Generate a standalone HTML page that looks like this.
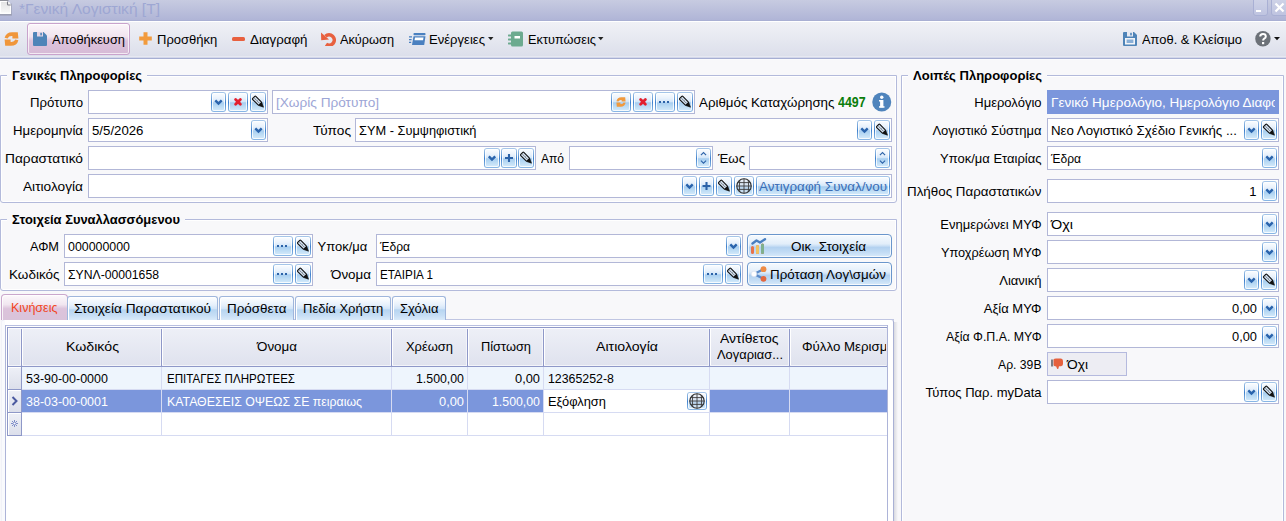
<!DOCTYPE html><html><head><meta charset="utf-8"><style>
html,body{margin:0;padding:0;}
body{width:1286px;height:521px;overflow:hidden;position:relative;background:#f8f8fa;font-family:"Liberation Sans",sans-serif;}
.t{position:absolute;white-space:nowrap;}
.inp{position:absolute;box-sizing:border-box;background:#fff;border:1px solid #b2b7d7;}
.sb{position:absolute;box-sizing:border-box;border:1px solid transparent;border-radius:3px;background:linear-gradient(#fbfdff 0%,#e9f2fc 30%,#d2e6f9 50%,#a6cdf0 54%,#bcdcf5 75%,#d6ebfb 100%) padding-box,linear-gradient(#a9c8ea 0%,#6a9fd8 35%,#3f80cc 52%,#6aa0da 75%,#8ab8e6 100%) border-box;box-shadow:inset 0 0 0 1px rgba(255,255,255,0.8);overflow:hidden;}
.bb{position:absolute;box-sizing:border-box;border:1px solid #6a96cc;border-radius:4px;background:linear-gradient(#f6fafe 0%,#e2eefa 40%,#c9dff5 50%,#b2d1f0 56%,#c4ddf5 80%,#d8eafa 100%);box-shadow:inset 0 0 0 1px rgba(255,255,255,0.75);}
</style></head><body>

<div style="position:absolute;left:0px;top:0px;width:1286px;height:20px;background:linear-gradient(#c7cbe1,#b0b5d7);"></div>
<div style="position:absolute;left:0px;top:20px;width:1286px;height:1px;background:#a9afd3;"></div>
<div style="position:absolute;left:0px;top:21px;width:1286px;height:1px;background:#ffffff;"></div>
<svg width="13" height="17" style="position:absolute;left:0;top:0"><defs><linearGradient id="dg" x1="0" y1="0" x2="0" y2="1"><stop offset="0" stop-color="#e4e4e4"/><stop offset="1" stop-color="#f7f7f7"/></linearGradient></defs><rect x="0" y="14" width="11.5" height="1.6" fill="#9598a8" opacity="0.8"/><rect x="11" y="3.5" width="0.9" height="12" fill="#9598a8" opacity="0.6"/><rect x="0" y="0" width="8.5" height="1" fill="#8e9098"/><path d="M0 1 H7.5 L11 4.5 V14 H0Z" fill="#fefefe"/><rect x="1" y="2" width="9" height="10.5" fill="url(#dg)"/><path d="M0 1.5 H7 L10.5 5 V13" fill="none" stroke="#fff" stroke-width="1"/><path d="M7.5 1.5 V4.2 Q7.5 5 8.3 5 H10.8" fill="none" stroke="#7d7f88" stroke-width="1.1"/></svg>
<div class="t" style="left:19.00px;top:-0.98px;font-size:15px;line-height:19px;color:#9ea7d3;transform:scaleX(1.0365);transform-origin:0 0;">*Γενική Λογιστική [Τ]</div>
<div style="position:absolute;left:1253px;top:-3px;width:15px;height:19px;border:1px solid #a9b0d4;border-radius:3px;box-sizing:border-box;background:linear-gradient(#d0d4e8,#bfc4e0)"></div>
<div style="position:absolute;left:1256px;top:10px;width:5px;height:2px;background:#fff;"></div>
<div style="position:absolute;left:1271px;top:-3px;width:18px;height:19px;border:1px solid #a9b0d4;border-radius:3px;box-sizing:border-box;background:linear-gradient(#d0d4e8,#bfc4e0)"></div>
<svg width="12" height="12" style="position:absolute;left:1274px;top:2px"><path d="M1.5 1.5 L9.5 9.5 M9.5 1.5 L1.5 9.5" stroke="#fff" stroke-width="2.2"/></svg>
<div style="position:absolute;left:0px;top:22px;width:1286px;height:34px;background:linear-gradient(#f0f1f6,#dcdfeb);"></div>
<div style="position:absolute;left:0px;top:56px;width:1286px;height:1px;background:#e6e8f1;"></div>
<div style="position:absolute;left:0px;top:57px;width:1286px;height:1px;background:#d3d7ea;"></div>
<div style="position:absolute;left:0px;top:58px;width:1286px;height:1px;background:#a6aed3;"></div>
<div style="position:absolute;left:0px;top:59px;width:1286px;height:1px;background:#fbfbfd;"></div>
<svg width="15" height="14" viewBox="0 0 15 14" style="position:absolute;left:4px;top:32px"><path d="M0.6 5.8 Q2 0.2 8 0.2 H13.8 L14.4 6.4 H8.4 V4.1 Q4.8 3.7 3.6 6.4 Z" fill="#f0963a"/><path d="M0.6 5.8 Q2 0.2 8 0.2 H13.8 L14.4 6.4 H8.4 V4.1 Q4.8 3.7 3.6 6.4 Z" fill="#f0963a" transform="rotate(180 7.5 7)"/></svg>
<div style="position:absolute;left:27px;top:23px;width:103px;height:32px;box-sizing:border-box;border:1px solid #c9a3cc;border-radius:3px;background:linear-gradient(#fbf6fa 0%,#f1e4ef 42%,#ddc3dc 56%,#d6bad6 100%);box-shadow:inset 0 0 0 1px rgba(255,255,255,0.7)"></div>
<svg width="14" height="14" style="position:absolute;left:33px;top:32px"><path d="M1 0 H10.5 L14 3.5 V13 Q14 14 13 14 H1 Q0 14 0 13 V1 Q0 0 1 0Z" fill="#4f84b8"/><rect x="4" y="0" width="6" height="4.5" fill="#e6d6e6"/><rect x="7.3" y="0.8" width="1.6" height="2.6" fill="#4f84b8"/></svg>
<div class="t" style="left:52.00px;top:31.00px;font-size:13px;line-height:17px;color:#000;transform:scaleX(0.9888);transform-origin:0 0;">Αποθήκευση</div>
<svg width="13" height="13" style="position:absolute;left:139px;top:32px"><path d="M6.5 0.2 V12.8 M0.2 6.5 H12.8" stroke="#f29b3d" stroke-width="4"/></svg>
<div class="t" style="left:157.00px;top:31.00px;font-size:13px;line-height:17px;color:#000;">Προσθήκη</div>
<svg width="13" height="4" style="position:absolute;left:232px;top:37px"><rect x="0" y="0" width="13" height="4" rx="1.5" fill="#e8603f"/></svg>
<div class="t" style="left:250.00px;top:31.00px;font-size:13px;line-height:17px;color:#000;transform:scaleX(1.0236);transform-origin:0 0;">Διαγραφή</div>
<svg width="15" height="14" style="position:absolute;left:321px;top:32px"><path d="M4.5 4.2 A5.2 5.2 0 1 1 5 12.2" fill="none" stroke="#e8603f" stroke-width="3.6"/><path d="M0 0.6 L0.2 8.2 L8 7.4Z" fill="#e8603f"/></svg>
<div class="t" style="left:340.00px;top:31.00px;font-size:13px;line-height:17px;color:#000;transform:scaleX(0.9801);transform-origin:0 0;">Ακύρωση</div>
<svg width="17" height="13" style="position:absolute;left:409px;top:33px"><rect x="4.5" y="0" width="12" height="2.2" rx="0.8" fill="#4a80c0"/><path d="M4.5 3.2 H16.5 L15.2 12 H3 Z" fill="#4a80c0"/><path d="M6 4.6 H14.5 L14 7.2 H5.5Z" fill="#fff"/><path d="M0 3.8 H3 M0 6.6 H2.6 M0 9.4 H2.2" stroke="#4a80c0" stroke-width="1.3"/></svg>
<div class="t" style="left:429.00px;top:31.00px;font-size:13px;line-height:17px;color:#000;transform:scaleX(1.0070);transform-origin:0 0;">Ενέργειες</div>
<svg width="6" height="4" style="position:absolute;left:488px;top:37px"><path d="M0 0 H5.5 L2.75 3.2Z" fill="#222"/></svg>
<svg width="15" height="16" style="position:absolute;left:508px;top:31px"><rect x="3" y="0.5" width="12" height="15" rx="1.5" fill="#6caa8f"/><rect x="6.5" y="5" width="5.5" height="2.5" fill="#fff"/><path d="M0.6 4.5 H4 M0.6 8.5 H4 M0.6 12.5 H4" stroke="#6caa8f" stroke-width="1.8" stroke-linecap="round"/></svg>
<div class="t" style="left:528.00px;top:31.00px;font-size:13px;line-height:17px;color:#000;transform:scaleX(0.9806);transform-origin:0 0;">Εκτυπώσεις</div>
<svg width="6" height="4" style="position:absolute;left:598px;top:37px"><path d="M0 0 H5.5 L2.75 3.2Z" fill="#222"/></svg>
<svg width="15" height="14" style="position:absolute;left:1123px;top:32px"><path d="M1 0 H11 L14 3 V13 Q14 14 13 14 H1 Q0 14 0 13 V1 Q0 0 1 0Z" fill="#4f84b8"/><rect x="4" y="0" width="6" height="4.5" fill="#e8eaf2"/><rect x="7.2" y="0.8" width="1.6" height="2.6" fill="#4f84b8"/><rect x="2" y="6" width="10" height="6.5" fill="#f2f4f8"/><rect x="3.6" y="7.5" width="6.8" height="3.5" fill="#88aed6"/></svg>
<div class="t" style="left:1142.00px;top:31.00px;font-size:13px;line-height:17px;color:#000;transform:scaleX(0.9909);transform-origin:0 0;">Αποθ. &amp; Κλείσιμο</div>
<svg width="16" height="16" style="position:absolute;left:1255px;top:31px"><circle cx="7.9" cy="7.8" r="7.7" fill="#6c7178"/><path d="M5.2 5.6 Q5.2 3 8 3 Q10.8 3 10.8 5.4 Q10.8 6.8 9.2 7.6 Q8.1 8.2 8.1 9.6" fill="none" stroke="#fff" stroke-width="2"/><rect x="7" y="11" width="2.2" height="2.2" fill="#fff"/></svg>
<svg width="6" height="4" style="position:absolute;left:1274px;top:37px"><path d="M0 0 H6 L3 3.2Z" fill="#111"/></svg>
<div style="position:absolute;left:0px;top:75px;width:897px;height:128px;box-sizing:border-box;border:1px solid #b3badb;border-radius:0 0 3px 3px;box-shadow:inset 0 0 0 1px rgba(255,255,255,0.9);"></div>
<div style="position:absolute;left:7px;top:74px;width:140px;height:3px;background:#f8f8fa;"></div>
<div class="t" style="left:12.00px;top:66.60px;font-size:13.7px;line-height:17.7px;color:#000;font-weight:bold;transform:scaleX(0.9448);transform-origin:0 0;">Γενικές Πληροφορίες</div>
<div class="t" style="left:30.00px;top:94.00px;font-size:13px;line-height:17px;color:#000;transform:scaleX(1.0174);transform-origin:0 0;">Πρότυπο</div>
<div class="inp" style="left:88px;top:90px;width:180px;height:24px;"></div>
<div class="sb" style="left:211px;top:92px;width:15px;height:20px"><svg width="13" height="18" style="position:absolute;left:0;top:0"><path d="M3.3 7.4 L6.5 10.6 L9.7 7.4" fill="none" stroke="#2a64ad" stroke-width="2.5"/></svg></div>
<div class="sb" style="left:228px;top:92px;width:20px;height:20px"><svg width="18" height="18" style="position:absolute;left:0;top:0"><path d="M6.6 6.4 L11.4 11.2 M11.4 6.4 L6.6 11.2" stroke="#e3202e" stroke-width="2.8" stroke-linecap="round"/></svg></div>
<div class="sb" style="left:250px;top:92px;width:16px;height:20px"><svg width="14" height="18" style="position:absolute;left:0;top:0"><g transform="translate(7.4 9.1) rotate(-45)"><rect x="-2.2" y="-6.6" width="4.4" height="9.2" rx="0.8" fill="#d4e2f2" stroke="#111" stroke-width="1.15"/><path d="M-2.2 2.6 L0 7.2 L2.2 2.6Z" fill="#111" stroke="#111" stroke-width="0.6"/><line x1="0" y1="-5.4" x2="0" y2="2.6" stroke="#1a1a1a" stroke-width="0.9" stroke-dasharray="1.1 0.9"/></g></svg></div>
<div class="inp" style="left:272px;top:90px;width:423px;height:24px;"></div>
<div class="t" style="left:276.00px;top:94.00px;font-size:13px;line-height:17px;color:#9da6d6;transform:scaleX(1.0478);transform-origin:0 0;">[Χωρίς Πρότυπο]</div>
<div class="sb" style="left:611px;top:92px;width:20px;height:20px"><svg width="10" height="10" viewBox="0 0 15 14" preserveAspectRatio="none" style="position:absolute;left:4.0px;top:4.0px"><path d="M0.6 5.8 Q2 0.2 8 0.2 H13.8 L14.4 6.4 H8.4 V4.1 Q4.8 3.7 3.6 6.4 Z" fill="#f09a3e"/><path d="M0.6 5.8 Q2 0.2 8 0.2 H13.8 L14.4 6.4 H8.4 V4.1 Q4.8 3.7 3.6 6.4 Z" fill="#f09a3e" transform="rotate(180 7.5 7)"/></svg></div>
<div class="sb" style="left:633px;top:92px;width:20px;height:20px"><svg width="18" height="18" style="position:absolute;left:0;top:0"><path d="M6.6 6.4 L11.4 11.2 M11.4 6.4 L6.6 11.2" stroke="#e3202e" stroke-width="2.8" stroke-linecap="round"/></svg></div>
<div class="sb" style="left:655px;top:92px;width:20px;height:20px"><svg width="18" height="18" style="position:absolute;left:0;top:0"><rect x="3.0" y="8.0" width="2" height="2" fill="#2b62a8"/><rect x="7.0" y="8.0" width="2" height="2" fill="#2b62a8"/><rect x="11.0" y="8.0" width="2" height="2" fill="#2b62a8"/></svg></div>
<div class="sb" style="left:677px;top:92px;width:16px;height:20px"><svg width="14" height="18" style="position:absolute;left:0;top:0"><g transform="translate(7.4 9.1) rotate(-45)"><rect x="-2.2" y="-6.6" width="4.4" height="9.2" rx="0.8" fill="#d4e2f2" stroke="#111" stroke-width="1.15"/><path d="M-2.2 2.6 L0 7.2 L2.2 2.6Z" fill="#111" stroke="#111" stroke-width="0.6"/><line x1="0" y1="-5.4" x2="0" y2="2.6" stroke="#1a1a1a" stroke-width="0.9" stroke-dasharray="1.1 0.9"/></g></svg></div>
<div class="t" style="left:699.00px;top:94.00px;font-size:13px;line-height:17px;color:#000;transform:scaleX(1.0259);transform-origin:0 0;">Αριθμός Καταχώρησης</div>
<div class="t" style="left:838.00px;top:93.00px;font-size:14px;line-height:18px;color:#0a7d0a;font-weight:bold;transform:scaleX(0.8835);transform-origin:0 0;">4497</div>
<svg width="20" height="20" style="position:absolute;left:872px;top:92px"><circle cx="9.75" cy="10" r="9.5" fill="#4f84bc"/><circle cx="9.75" cy="5.2" r="1.7" fill="#fff"/><rect x="8.1" y="8" width="3.3" height="7.5" fill="#fff"/><rect x="7" y="8" width="2" height="1.5" fill="#fff"/><rect x="7" y="14.2" width="5.5" height="1.5" fill="#fff"/></svg>
<div class="t" style="left:13.00px;top:122.00px;font-size:13px;line-height:17px;color:#000;transform:scaleX(1.0156);transform-origin:0 0;">Ημερομηνία</div>
<div class="inp" style="left:88px;top:118px;width:180px;height:24px;"></div>
<div class="t" style="left:92.00px;top:122.00px;font-size:13px;line-height:17px;color:#000;transform:scaleX(1.0173);transform-origin:0 0;">5/5/2026</div>
<div class="sb" style="left:251px;top:120px;width:15px;height:20px"><svg width="13" height="18" style="position:absolute;left:0;top:0"><path d="M3.3 7.4 L6.5 10.6 L9.7 7.4" fill="none" stroke="#2a64ad" stroke-width="2.5"/></svg></div>
<div class="t" style="left:312.80px;top:122.00px;font-size:13px;line-height:17px;color:#000;transform:scaleX(1.0496);transform-origin:0 0;">Τύπος</div>
<div class="inp" style="left:355px;top:118px;width:537px;height:24px;"></div>
<div class="t" style="left:359.00px;top:122.00px;font-size:13px;line-height:17px;color:#000;transform:scaleX(0.9847);transform-origin:0 0;">ΣΥΜ - Συμψηφιστική</div>
<div class="sb" style="left:857px;top:120px;width:15px;height:20px"><svg width="13" height="18" style="position:absolute;left:0;top:0"><path d="M3.3 7.4 L6.5 10.6 L9.7 7.4" fill="none" stroke="#2a64ad" stroke-width="2.5"/></svg></div>
<div class="sb" style="left:874px;top:120px;width:16px;height:20px"><svg width="14" height="18" style="position:absolute;left:0;top:0"><g transform="translate(7.4 9.1) rotate(-45)"><rect x="-2.2" y="-6.6" width="4.4" height="9.2" rx="0.8" fill="#d4e2f2" stroke="#111" stroke-width="1.15"/><path d="M-2.2 2.6 L0 7.2 L2.2 2.6Z" fill="#111" stroke="#111" stroke-width="0.6"/><line x1="0" y1="-5.4" x2="0" y2="2.6" stroke="#1a1a1a" stroke-width="0.9" stroke-dasharray="1.1 0.9"/></g></svg></div>
<div class="t" style="left:5.00px;top:150.00px;font-size:13px;line-height:17px;color:#000;transform:scaleX(1.0552);transform-origin:0 0;">Παραστατικό</div>
<div class="inp" style="left:88px;top:146px;width:448px;height:24px;"></div>
<div class="sb" style="left:484px;top:148px;width:16px;height:20px"><svg width="14" height="18" style="position:absolute;left:0;top:0"><path d="M3.8 7.4 L7.0 10.6 L10.2 7.4" fill="none" stroke="#2a64ad" stroke-width="2.5"/></svg></div>
<div class="sb" style="left:501px;top:148px;width:16px;height:20px"><svg width="14" height="18" style="position:absolute;left:0;top:0"><path d="M3.0 9.0 H11.0 M7.0 5.0 V13.0" stroke="#2b62a8" stroke-width="2.1"/></svg></div>
<div class="sb" style="left:518px;top:148px;width:16px;height:20px"><svg width="14" height="18" style="position:absolute;left:0;top:0"><g transform="translate(7.4 9.1) rotate(-45)"><rect x="-2.2" y="-6.6" width="4.4" height="9.2" rx="0.8" fill="#d4e2f2" stroke="#111" stroke-width="1.15"/><path d="M-2.2 2.6 L0 7.2 L2.2 2.6Z" fill="#111" stroke="#111" stroke-width="0.6"/><line x1="0" y1="-5.4" x2="0" y2="2.6" stroke="#1a1a1a" stroke-width="0.9" stroke-dasharray="1.1 0.9"/></g></svg></div>
<div class="t" style="left:541.00px;top:150.00px;font-size:13px;line-height:17px;color:#000;transform:scaleX(0.9246);transform-origin:0 0;">Από</div>
<div class="inp" style="left:569px;top:146px;width:144px;height:24px;"></div>
<div class="sb" style="left:696px;top:148px;width:15px;height:20px"><svg width="13" height="18" style="position:absolute;left:0;top:0"><path d="M3.9 6.2 L6.5 3.5999999999999996 L9.1 6.2 M3.9 11.6 L6.5 14.2 L9.1 11.6" fill="none" stroke="#2b62a8" stroke-width="1.1"/></svg></div>
<div class="t" style="left:717.50px;top:150.00px;font-size:13px;line-height:17px;color:#000;transform:scaleX(1.0147);transform-origin:0 0;">Έως</div>
<div class="inp" style="left:749px;top:146px;width:143px;height:24px;"></div>
<div class="sb" style="left:875px;top:148px;width:15px;height:20px"><svg width="13" height="18" style="position:absolute;left:0;top:0"><path d="M3.9 6.2 L6.5 3.5999999999999996 L9.1 6.2 M3.9 11.6 L6.5 14.2 L9.1 11.6" fill="none" stroke="#2b62a8" stroke-width="1.1"/></svg></div>
<div class="t" style="left:23.00px;top:178.00px;font-size:13px;line-height:17px;color:#000;transform:scaleX(1.0523);transform-origin:0 0;">Αιτιολογία</div>
<div class="inp" style="left:88px;top:174px;width:804px;height:24px;"></div>
<div class="sb" style="left:682px;top:176px;width:15px;height:20px"><svg width="13" height="18" style="position:absolute;left:0;top:0"><path d="M3.3 7.4 L6.5 10.6 L9.7 7.4" fill="none" stroke="#2a64ad" stroke-width="2.5"/></svg></div>
<div class="sb" style="left:699px;top:176px;width:15px;height:20px"><svg width="13" height="18" style="position:absolute;left:0;top:0"><path d="M2.5 9.0 H10.5 M6.5 5.0 V13.0" stroke="#2b62a8" stroke-width="2.1"/></svg></div>
<div class="sb" style="left:716px;top:176px;width:16px;height:20px"><svg width="14" height="18" style="position:absolute;left:0;top:0"><g transform="translate(7.4 9.1) rotate(-45)"><rect x="-2.2" y="-6.6" width="4.4" height="9.2" rx="0.8" fill="#d4e2f2" stroke="#111" stroke-width="1.15"/><path d="M-2.2 2.6 L0 7.2 L2.2 2.6Z" fill="#111" stroke="#111" stroke-width="0.6"/><line x1="0" y1="-5.4" x2="0" y2="2.6" stroke="#1a1a1a" stroke-width="0.9" stroke-dasharray="1.1 0.9"/></g></svg></div>
<div class="sb" style="left:734px;top:176px;width:20px;height:20px"><svg width="18" height="18" style="position:absolute;left:0;top:0"><defs><clipPath id="gc1818"><circle cx="9.0" cy="9.0" r="7.6"/></clipPath></defs><circle cx="9.0" cy="9.0" r="7.6" fill="#d8dde4" fill-opacity="0.35"/><g clip-path="url(#gc1818)" stroke="#3c3c3c" stroke-width="0.9" fill="none"><path d="M4.8 1.0 Q4.0 9.0 4.8 17.0 M9.0 1.0 V17.0 M13.2 1.0 Q14.0 9.0 13.2 17.0"/><path d="M1.0 5.6 H17.0 M1.0 9.0 H17.0 M1.0 12.4 H17.0"/></g><circle cx="9.0" cy="9.0" r="7.2" fill="none" stroke="#333" stroke-width="1.1"/></svg></div>
<div class="sb" style="left:756px;top:176px;width:134px;height:20px"></div>
<div class="t" style="left:759.00px;top:178.00px;font-size:13px;line-height:17px;color:#3a6db5;transform:scaleX(1.0342);transform-origin:0 0;">Αντιγραφή Συναλ/νου</div>
<div style="position:absolute;left:0px;top:219px;width:897px;height:72px;box-sizing:border-box;border:1px solid #b3badb;border-radius:0 0 3px 3px;box-shadow:inset 0 0 0 1px rgba(255,255,255,0.9);"></div>
<div style="position:absolute;left:7px;top:218px;width:178px;height:3px;background:#f8f8fa;"></div>
<div class="t" style="left:12.00px;top:210.60px;font-size:13.7px;line-height:17.7px;color:#000;font-weight:bold;transform:scaleX(0.9446);transform-origin:0 0;">Στοιχεία Συναλλασσόμενου</div>
<div class="t" style="left:30.00px;top:238.00px;font-size:13px;line-height:17px;color:#000;transform:scaleX(0.9831);transform-origin:0 0;">ΑΦΜ</div>
<div class="inp" style="left:64px;top:234px;width:249px;height:24px;"></div>
<div class="t" style="left:68.00px;top:238.00px;font-size:13px;line-height:17px;color:#000;transform:scaleX(0.9522);transform-origin:0 0;">000000000</div>
<div class="sb" style="left:273px;top:236px;width:20px;height:20px"><svg width="18" height="18" style="position:absolute;left:0;top:0"><rect x="3.0" y="8.0" width="2" height="2" fill="#2b62a8"/><rect x="7.0" y="8.0" width="2" height="2" fill="#2b62a8"/><rect x="11.0" y="8.0" width="2" height="2" fill="#2b62a8"/></svg></div>
<div class="sb" style="left:295px;top:236px;width:16px;height:20px"><svg width="14" height="18" style="position:absolute;left:0;top:0"><g transform="translate(7.4 9.1) rotate(-45)"><rect x="-2.2" y="-6.6" width="4.4" height="9.2" rx="0.8" fill="#d4e2f2" stroke="#111" stroke-width="1.15"/><path d="M-2.2 2.6 L0 7.2 L2.2 2.6Z" fill="#111" stroke="#111" stroke-width="0.6"/><line x1="0" y1="-5.4" x2="0" y2="2.6" stroke="#1a1a1a" stroke-width="0.9" stroke-dasharray="1.1 0.9"/></g></svg></div>
<div class="t" style="left:317.50px;top:238.00px;font-size:13px;line-height:17px;color:#000;">Υποκ/μα</div>
<div class="inp" style="left:376px;top:234px;width:367px;height:24px;"></div>
<div class="t" style="left:380.00px;top:238.00px;font-size:13px;line-height:17px;color:#000;transform:scaleX(0.9280);transform-origin:0 0;">Έδρα</div>
<div class="sb" style="left:726px;top:236px;width:15px;height:20px"><svg width="13" height="18" style="position:absolute;left:0;top:0"><path d="M3.3 7.4 L6.5 10.6 L9.7 7.4" fill="none" stroke="#2a64ad" stroke-width="2.5"/></svg></div>
<div class="bb" style="left:747px;top:234px;width:145px;height:24px"></div>
<svg width="16" height="16" style="position:absolute;left:751px;top:238px"><path d="M1.5 9.5 V14.5 M6.5 8.5 V14.5 M11.5 7 V14.5" stroke-width="3" stroke-linecap="round" stroke="#e8734a"/><path d="M6.5 8.5 V14.5" stroke-width="3" stroke-linecap="round" stroke="#f0c463"/><path d="M11.5 7 V14.5" stroke-width="3" stroke-linecap="round" stroke="#7fb08e"/><path d="M1.5 5.5 L5.5 2.5 L9 4.5 L14 1.2" fill="none" stroke="#4a7fc0" stroke-width="2.4" stroke-linejoin="round" stroke-linecap="round"/></svg>
<div class="t" style="left:791.00px;top:238.00px;font-size:13px;line-height:17px;color:#000;transform:scaleX(1.0383);transform-origin:0 0;">Οικ. Στοιχεία</div>
<div class="t" style="left:8.50px;top:266.00px;font-size:13px;line-height:17px;color:#000;transform:scaleX(1.0382);transform-origin:0 0;">Κωδικός</div>
<div class="inp" style="left:64px;top:262px;width:249px;height:24px;"></div>
<div class="t" style="left:68.00px;top:266.00px;font-size:13px;line-height:17px;color:#000;transform:scaleX(0.9383);transform-origin:0 0;">ΣΥΝΛ-00001658</div>
<div class="sb" style="left:273px;top:264px;width:20px;height:20px"><svg width="18" height="18" style="position:absolute;left:0;top:0"><rect x="3.0" y="8.0" width="2" height="2" fill="#2b62a8"/><rect x="7.0" y="8.0" width="2" height="2" fill="#2b62a8"/><rect x="11.0" y="8.0" width="2" height="2" fill="#2b62a8"/></svg></div>
<div class="sb" style="left:295px;top:264px;width:16px;height:20px"><svg width="14" height="18" style="position:absolute;left:0;top:0"><g transform="translate(7.4 9.1) rotate(-45)"><rect x="-2.2" y="-6.6" width="4.4" height="9.2" rx="0.8" fill="#d4e2f2" stroke="#111" stroke-width="1.15"/><path d="M-2.2 2.6 L0 7.2 L2.2 2.6Z" fill="#111" stroke="#111" stroke-width="0.6"/><line x1="0" y1="-5.4" x2="0" y2="2.6" stroke="#1a1a1a" stroke-width="0.9" stroke-dasharray="1.1 0.9"/></g></svg></div>
<div class="t" style="left:331.00px;top:266.00px;font-size:13px;line-height:17px;color:#000;transform:scaleX(1.0310);transform-origin:0 0;">Όνομα</div>
<div class="inp" style="left:376px;top:262px;width:367px;height:24px;"></div>
<div class="t" style="left:380.00px;top:266.00px;font-size:13px;line-height:17px;color:#000;transform:scaleX(0.8983);transform-origin:0 0;">ΕΤΑΙΡΙΑ 1</div>
<div class="sb" style="left:703px;top:264px;width:20px;height:20px"><svg width="18" height="18" style="position:absolute;left:0;top:0"><rect x="3.0" y="8.0" width="2" height="2" fill="#2b62a8"/><rect x="7.0" y="8.0" width="2" height="2" fill="#2b62a8"/><rect x="11.0" y="8.0" width="2" height="2" fill="#2b62a8"/></svg></div>
<div class="sb" style="left:725px;top:264px;width:16px;height:20px"><svg width="14" height="18" style="position:absolute;left:0;top:0"><g transform="translate(7.4 9.1) rotate(-45)"><rect x="-2.2" y="-6.6" width="4.4" height="9.2" rx="0.8" fill="#d4e2f2" stroke="#111" stroke-width="1.15"/><path d="M-2.2 2.6 L0 7.2 L2.2 2.6Z" fill="#111" stroke="#111" stroke-width="0.6"/><line x1="0" y1="-5.4" x2="0" y2="2.6" stroke="#1a1a1a" stroke-width="0.9" stroke-dasharray="1.1 0.9"/></g></svg></div>
<div class="bb" style="left:747px;top:262px;width:145px;height:24px"></div>
<svg width="16" height="16" style="position:absolute;left:751px;top:266px"><path d="M3 8 L12.5 3.2 M3 8 L12.5 12.8" stroke="#5b8bc9" stroke-width="2.4"/><circle cx="3" cy="8" r="2.8" fill="#fff" stroke="#d0d8e8" stroke-width="0.5"/><circle cx="12.5" cy="3.2" r="2.9" fill="#ef8c45"/><circle cx="12.5" cy="12.8" r="2.9" fill="#e2673f"/></svg>
<div class="t" style="left:770.00px;top:266.00px;font-size:13px;line-height:17px;color:#000;transform:scaleX(1.0297);transform-origin:0 0;">Πρόταση Λογ\σμών</div>
<div style="position:absolute;left:1px;top:319px;width:893px;height:210px;box-sizing:border-box;border:1px solid #c9cde6;border-left-color:#f1f2f8;border-right-color:#a9b1d5;border-radius:3px;background:linear-gradient(to right,#f9fafd 0,#f9fafd 3px,#fff 3px);"></div>
<div style="position:absolute;left:894px;top:322px;width:4px;height:199px;background:linear-gradient(to right,#d9dae0,#f8f8fa);"></div>
<div style="position:absolute;left:1px;top:319px;width:893px;height:1px;background:#c0c6e2;"></div>
<div style="position:absolute;left:1px;top:294px;width:67px;height:26px;box-sizing:border-box;border:1px solid #caa7cc;border-bottom:none;border-radius:4px 4px 0 0;background:linear-gradient(#fcf9fb 0%,#f1e6f0 38%,#dcc3db 55%,#d9c3da 100%);box-shadow:inset 1px 1px 0 rgba(255,255,255,0.8);"></div>
<div class="t" style="left:11.30px;top:299.00px;font-size:13px;line-height:17px;color:#f2451c;transform:scaleX(0.9631);transform-origin:0 0;">Κινήσεις</div>
<div style="position:absolute;left:67px;top:296px;width:151px;height:24px;box-sizing:border-box;border:1px solid #9fb6dc;border-bottom:none;border-radius:3px 3px 0 0;background:linear-gradient(#ffffff 0%,#e6f0fb 35%,#d3e5f8 50%,#b7d5f1 56%,#c6def5 80%,#d9eafa 100%);box-shadow:inset 1px 1px 0 #fff;"></div>
<div class="t" style="left:73.50px;top:300.00px;font-size:13px;line-height:17px;color:#000;transform:scaleX(1.0526);transform-origin:0 0;">Στοιχεία Παραστατικού</div>
<div style="position:absolute;left:219px;top:296px;width:75px;height:24px;box-sizing:border-box;border:1px solid #9fb6dc;border-bottom:none;border-radius:3px 3px 0 0;background:linear-gradient(#ffffff 0%,#e6f0fb 35%,#d3e5f8 50%,#b7d5f1 56%,#c6def5 80%,#d9eafa 100%);box-shadow:inset 1px 1px 0 #fff;"></div>
<div class="t" style="left:227.00px;top:300.00px;font-size:13px;line-height:17px;color:#000;transform:scaleX(1.0339);transform-origin:0 0;">Πρόσθετα</div>
<div style="position:absolute;left:295px;top:296px;width:96px;height:24px;box-sizing:border-box;border:1px solid #9fb6dc;border-bottom:none;border-radius:3px 3px 0 0;background:linear-gradient(#ffffff 0%,#e6f0fb 35%,#d3e5f8 50%,#b7d5f1 56%,#c6def5 80%,#d9eafa 100%);box-shadow:inset 1px 1px 0 #fff;"></div>
<div class="t" style="left:303.00px;top:300.00px;font-size:13px;line-height:17px;color:#000;">Πεδία Χρήστη</div>
<div style="position:absolute;left:392px;top:296px;width:54px;height:24px;box-sizing:border-box;border:1px solid #9fb6dc;border-bottom:none;border-radius:3px 3px 0 0;background:linear-gradient(#ffffff 0%,#e6f0fb 35%,#d3e5f8 50%,#b7d5f1 56%,#c6def5 80%,#d9eafa 100%);box-shadow:inset 1px 1px 0 #fff;"></div>
<div class="t" style="left:400.00px;top:300.00px;font-size:13px;line-height:17px;color:#000;">Σχόλια</div>
<div style="position:absolute;left:5px;top:325px;width:883px;height:1px;background:#b8bfe0;"></div>
<div style="position:absolute;left:5px;top:325px;width:1px;height:196px;background:#adb4d8;"></div>
<div style="position:absolute;left:887px;top:325px;width:1px;height:196px;background:#adb4d8;"></div>
<div style="position:absolute;left:7px;top:327px;width:880px;height:39px;background:linear-gradient(#eef0f7,#dfe2ee);"></div>
<div style="position:absolute;left:7px;top:327px;width:880px;height:1px;background:#8e98c8;"></div>
<div style="position:absolute;left:7px;top:327px;width:1px;height:109px;background:#8e98c8;"></div>
<div style="position:absolute;left:8px;top:365px;width:878px;height:1px;background:#f3f4f9;"></div>
<div style="position:absolute;left:7px;top:366px;width:880px;height:1px;background:#8e98c8;"></div>
<div style="position:absolute;left:21px;top:327px;width:1px;height:40px;background:#8e98c8;"></div>
<div style="position:absolute;left:22px;top:328px;width:1px;height:37px;background:#fff;"></div>
<div style="position:absolute;left:20px;top:329px;width:1px;height:36px;background:#f4f5fa;"></div>
<div style="position:absolute;left:161px;top:327px;width:1px;height:40px;background:#8e98c8;"></div>
<div style="position:absolute;left:162px;top:328px;width:1px;height:37px;background:#fff;"></div>
<div style="position:absolute;left:160px;top:329px;width:1px;height:36px;background:#f4f5fa;"></div>
<div style="position:absolute;left:391px;top:327px;width:1px;height:40px;background:#8e98c8;"></div>
<div style="position:absolute;left:392px;top:328px;width:1px;height:37px;background:#fff;"></div>
<div style="position:absolute;left:390px;top:329px;width:1px;height:36px;background:#f4f5fa;"></div>
<div style="position:absolute;left:467px;top:327px;width:1px;height:40px;background:#8e98c8;"></div>
<div style="position:absolute;left:468px;top:328px;width:1px;height:37px;background:#fff;"></div>
<div style="position:absolute;left:466px;top:329px;width:1px;height:36px;background:#f4f5fa;"></div>
<div style="position:absolute;left:543px;top:327px;width:1px;height:40px;background:#8e98c8;"></div>
<div style="position:absolute;left:544px;top:328px;width:1px;height:37px;background:#fff;"></div>
<div style="position:absolute;left:542px;top:329px;width:1px;height:36px;background:#f4f5fa;"></div>
<div style="position:absolute;left:709px;top:327px;width:1px;height:40px;background:#8e98c8;"></div>
<div style="position:absolute;left:710px;top:328px;width:1px;height:37px;background:#fff;"></div>
<div style="position:absolute;left:708px;top:329px;width:1px;height:36px;background:#f4f5fa;"></div>
<div style="position:absolute;left:789px;top:327px;width:1px;height:40px;background:#8e98c8;"></div>
<div style="position:absolute;left:790px;top:328px;width:1px;height:37px;background:#fff;"></div>
<div style="position:absolute;left:788px;top:329px;width:1px;height:36px;background:#f4f5fa;"></div>
<div style="position:absolute;left:22px;top:367px;width:865px;height:22px;background:#eef5fd;"></div>
<div style="position:absolute;left:22px;top:389px;width:865px;height:1px;background:#d6dbf2;"></div>
<div style="position:absolute;left:22px;top:390px;width:522px;height:22px;background:#7b96dc;"></div>
<div style="position:absolute;left:544px;top:390px;width:165px;height:22px;background:#fff;"></div>
<div style="position:absolute;left:710px;top:390px;width:177px;height:22px;background:#7b96dc;"></div>
<div style="position:absolute;left:22px;top:412px;width:865px;height:1px;background:#d6dbf2;"></div>
<div style="position:absolute;left:22px;top:435px;width:865px;height:1px;background:#d6dbf2;"></div>
<div style="position:absolute;left:161px;top:367px;width:1px;height:68px;background:#d6dbf2;"></div>
<div style="position:absolute;left:391px;top:367px;width:1px;height:68px;background:#d6dbf2;"></div>
<div style="position:absolute;left:467px;top:367px;width:1px;height:68px;background:#d6dbf2;"></div>
<div style="position:absolute;left:543px;top:367px;width:1px;height:68px;background:#d6dbf2;"></div>
<div style="position:absolute;left:709px;top:367px;width:1px;height:68px;background:#d6dbf2;"></div>
<div style="position:absolute;left:789px;top:367px;width:1px;height:68px;background:#d6dbf2;"></div>
<div style="position:absolute;left:7px;top:367px;width:15px;height:23px;background:linear-gradient(#eef0f7,#dcdfeb);border:1px solid #8e98c8;border-top:none;box-sizing:border-box;box-shadow:inset 1px 1px 0 #fff;"></div>
<div style="position:absolute;left:7px;top:390px;width:15px;height:23px;background:linear-gradient(#eef0f7,#dcdfeb);border:1px solid #8e98c8;border-top:none;box-sizing:border-box;box-shadow:inset 1px 1px 0 #fff;"></div>
<div style="position:absolute;left:7px;top:413px;width:15px;height:23px;background:linear-gradient(#eef0f7,#dcdfeb);border:1px solid #8e98c8;border-top:none;box-sizing:border-box;box-shadow:inset 1px 1px 0 #fff;"></div>
<div style="position:absolute;left:8px;top:328px;width:878px;height:1px;background:#fbfbfe;"></div>
<div style="position:absolute;left:8px;top:328px;width:1px;height:37px;background:#fbfbfe;"></div>
<svg width="8" height="10" style="position:absolute;left:11px;top:396px"><path d="M1.5 1 L5.5 5 L1.5 9" fill="none" stroke="#4b5aa0" stroke-width="2"/></svg>
<svg width="8" height="8" style="position:absolute;left:11px;top:419.5px"><path d="M3.5 0 V7 M0 3.5 H7 M1 1 L6 6 M6 1 L1 6" stroke="#7282c4" stroke-width="0.9"/><circle cx="3.5" cy="3.5" r="1.1" fill="#fff"/></svg>
<div class="t" style="left:65.50px;top:338.00px;font-size:13px;line-height:17px;color:#000;transform:scaleX(1.0896);transform-origin:0 0;">Κωδικός</div>
<div class="t" style="left:256.50px;top:338.00px;font-size:13px;line-height:17px;color:#000;transform:scaleX(1.0310);transform-origin:0 0;">Όνομα</div>
<div class="t" style="left:406.00px;top:338.00px;font-size:13px;line-height:17px;color:#000;transform:scaleX(0.9941);transform-origin:0 0;">Χρέωση</div>
<div class="t" style="left:480.50px;top:338.00px;font-size:13px;line-height:17px;color:#000;transform:scaleX(0.9864);transform-origin:0 0;">Πίστωση</div>
<div class="t" style="left:595.50px;top:338.00px;font-size:13px;line-height:17px;color:#000;transform:scaleX(1.0874);transform-origin:0 0;">Αιτιολογία</div>
<div class="t" style="left:720.25px;top:330.00px;font-size:13px;line-height:17px;color:#000;transform:scaleX(1.0743);transform-origin:0 0;">Αντίθετος</div>
<div class="t" style="left:716.50px;top:346.00px;font-size:13px;line-height:17px;color:#000;transform:scaleX(0.9911);transform-origin:0 0;">Λογαριασ...</div>
<div style="position:absolute;left:790px;top:328px;width:96px;height:37px;overflow:hidden">
<div class="t" style="left:12.00px;top:10.00px;font-size:13px;line-height:17px;color:#000;transform:scaleX(1.0215);transform-origin:0 0;">Φύλλο Μερισμού</div>
</div>
<div class="t" style="left:26.00px;top:370.00px;font-size:13px;line-height:17px;color:#000;transform:scaleX(0.9610);transform-origin:0 0;">53-90-00-0000</div>
<div class="t" style="left:166.50px;top:370.00px;font-size:13px;line-height:17px;color:#000;transform:scaleX(0.8892);transform-origin:0 0;">ΕΠΙΤΑΓΕΣ ΠΛΗΡΩΤΕΕΣ</div>
<div class="t" style="left:416.00px;top:370.00px;font-size:13px;line-height:17px;color:#000;transform:scaleX(0.9481);transform-origin:0 0;">1.500,00</div>
<div class="t" style="left:515.00px;top:370.00px;font-size:13px;line-height:17px;color:#000;transform:scaleX(0.9877);transform-origin:0 0;">0,00</div>
<div class="t" style="left:548.00px;top:370.00px;font-size:13px;line-height:17px;color:#000;transform:scaleX(0.9505);transform-origin:0 0;">12365252-8</div>
<div class="t" style="left:26.00px;top:393.00px;font-size:13px;line-height:17px;color:#fff;transform:scaleX(0.9610);transform-origin:0 0;">38-03-00-0001</div>
<div class="t" style="left:166.50px;top:393.00px;font-size:13px;line-height:17px;color:#fff;transform:scaleX(0.9481);transform-origin:0 0;">ΚΑΤΑΘΕΣΕΙΣ ΟΨΕΩΣ ΣΕ πειραιως</div>
<div class="t" style="left:439.00px;top:393.00px;font-size:13px;line-height:17px;color:#fff;transform:scaleX(0.9877);transform-origin:0 0;">0,00</div>
<div class="t" style="left:492.00px;top:393.00px;font-size:13px;line-height:17px;color:#fff;transform:scaleX(0.9481);transform-origin:0 0;">1.500,00</div>
<div class="t" style="left:548.00px;top:393.00px;font-size:13px;line-height:17px;color:#000;transform:scaleX(0.9901);transform-origin:0 0;">Εξόφληση</div>
<div class="sb" style="left:687px;top:392px;width:20px;height:18px"><svg width="18" height="16" style="position:absolute;left:0;top:0"><defs><clipPath id="gc1816"><circle cx="9.0" cy="8.0" r="7.6"/></clipPath></defs><circle cx="9.0" cy="8.0" r="7.6" fill="#d8dde4" fill-opacity="0.35"/><g clip-path="url(#gc1816)" stroke="#3c3c3c" stroke-width="0.9" fill="none"><path d="M4.8 0.0 Q4.0 8.0 4.8 16.0 M9.0 0.0 V16.0 M13.2 0.0 Q14.0 8.0 13.2 16.0"/><path d="M1.0 4.6 H17.0 M1.0 8.0 H17.0 M1.0 11.4 H17.0"/></g><circle cx="9.0" cy="8.0" r="7.2" fill="none" stroke="#333" stroke-width="1.1"/></svg></div>
<div style="position:absolute;left:901px;top:75px;width:383px;height:460px;box-sizing:border-box;border:1px solid #b3badb;border-radius:0 0 3px 3px;box-shadow:inset 0 0 0 1px rgba(255,255,255,0.9);"></div>
<div style="position:absolute;left:908px;top:74px;width:139px;height:3px;background:#f8f8fa;"></div>
<div class="t" style="left:913.00px;top:66.60px;font-size:13.7px;line-height:17.7px;color:#000;font-weight:bold;transform:scaleX(0.9514);transform-origin:0 0;">Λοιπές Πληροφορίες</div>
<div class="t" style="left:974.30px;top:94.00px;font-size:13px;line-height:17px;color:#000;">Ημερολόγιο</div>
<div class="t" style="left:932.39px;top:122.00px;font-size:13px;line-height:17px;color:#000;">Λογιστικό Σύστημα</div>
<div class="t" style="left:940.00px;top:150.00px;font-size:13px;line-height:17px;color:#000;">Υποκ/μα Εταιρίας</div>
<div class="t" style="left:907.00px;top:183.00px;font-size:13px;line-height:17px;color:#000;transform:scaleX(1.0282);transform-origin:0 0;">Πλήθος Παραστατικών</div>
<div class="t" style="left:940.33px;top:216.00px;font-size:13px;line-height:17px;color:#000;">Ενημερώνει ΜΥΦ</div>
<div class="t" style="left:941.10px;top:244.00px;font-size:13px;line-height:17px;color:#000;transform:scaleX(0.9792);transform-origin:0 0;">Υποχρέωση ΜΥΦ</div>
<div class="t" style="left:999.28px;top:272.00px;font-size:13px;line-height:17px;color:#000;">Λιανική</div>
<div class="t" style="left:983.84px;top:300.00px;font-size:13px;line-height:17px;color:#000;">Αξία ΜΥΦ</div>
<div class="t" style="left:946.00px;top:328.00px;font-size:13px;line-height:17px;color:#000;transform:scaleX(0.9500);transform-origin:0 0;">Αξία Φ.Π.Α. ΜΥΦ</div>
<div class="t" style="left:998.00px;top:356.00px;font-size:13px;line-height:17px;color:#000;transform:scaleX(0.9371);transform-origin:0 0;">Αρ. 39Β</div>
<div class="t" style="left:925.38px;top:384.00px;font-size:13px;line-height:17px;color:#000;">Τύπος Παρ. myData</div>
<div style="position:absolute;left:1047px;top:90px;width:232px;height:24px;background:#7b96dc;"></div>
<div style="position:absolute;left:1047px;top:90px;width:228px;height:24px;overflow:hidden">
<div class="t" style="left:4.00px;top:4.00px;font-size:13px;line-height:17px;color:#fff;transform:scaleX(1.0400);transform-origin:0 0;">Γενικό Ημερολόγιο, Ημερολόγιο Διαφοράς</div>
</div>
<div class="inp" style="left:1047px;top:118px;width:232px;height:24px;"></div>
<div style="position:absolute;left:1048px;top:119px;width:190px;height:22px;overflow:hidden">
<div class="t" style="left:3.00px;top:3.00px;font-size:13px;line-height:17px;color:#000;transform:scaleX(1.0204);transform-origin:0 0;">Νεο Λογιστικό Σχέδιο Γενικής ...</div>
</div>
<div class="sb" style="left:1244px;top:120px;width:15px;height:20px"><svg width="13" height="18" style="position:absolute;left:0;top:0"><path d="M3.3 7.4 L6.5 10.6 L9.7 7.4" fill="none" stroke="#2a64ad" stroke-width="2.5"/></svg></div>
<div class="sb" style="left:1261px;top:120px;width:16px;height:20px"><svg width="14" height="18" style="position:absolute;left:0;top:0"><g transform="translate(7.4 9.1) rotate(-45)"><rect x="-2.2" y="-6.6" width="4.4" height="9.2" rx="0.8" fill="#d4e2f2" stroke="#111" stroke-width="1.15"/><path d="M-2.2 2.6 L0 7.2 L2.2 2.6Z" fill="#111" stroke="#111" stroke-width="0.6"/><line x1="0" y1="-5.4" x2="0" y2="2.6" stroke="#1a1a1a" stroke-width="0.9" stroke-dasharray="1.1 0.9"/></g></svg></div>
<div class="inp" style="left:1047px;top:146px;width:232px;height:24px;"></div>
<div class="t" style="left:1051.00px;top:150.00px;font-size:13px;line-height:17px;color:#000;transform:scaleX(0.9280);transform-origin:0 0;">Έδρα</div>
<div class="sb" style="left:1262px;top:148px;width:15px;height:20px"><svg width="13" height="18" style="position:absolute;left:0;top:0"><path d="M3.3 7.4 L6.5 10.6 L9.7 7.4" fill="none" stroke="#2a64ad" stroke-width="2.5"/></svg></div>
<div class="inp" style="left:1047px;top:179px;width:232px;height:24px;"></div>
<div class="t" style="left:1249.27px;top:183.00px;font-size:13px;line-height:17px;color:#000;">1</div>
<div class="sb" style="left:1262px;top:181px;width:15px;height:20px"><svg width="13" height="18" style="position:absolute;left:0;top:0"><path d="M3.3 7.4 L6.5 10.6 L9.7 7.4" fill="none" stroke="#2a64ad" stroke-width="2.5"/></svg></div>
<div class="inp" style="left:1047px;top:212px;width:232px;height:24px;"></div>
<div class="t" style="left:1051.00px;top:216.00px;font-size:13px;line-height:17px;color:#000;transform:scaleX(1.1122);transform-origin:0 0;">Όχι</div>
<div class="sb" style="left:1262px;top:214px;width:15px;height:20px"><svg width="13" height="18" style="position:absolute;left:0;top:0"><path d="M3.3 7.4 L6.5 10.6 L9.7 7.4" fill="none" stroke="#2a64ad" stroke-width="2.5"/></svg></div>
<div class="inp" style="left:1047px;top:240px;width:232px;height:24px;"></div>
<div class="sb" style="left:1262px;top:242px;width:15px;height:20px"><svg width="13" height="18" style="position:absolute;left:0;top:0"><path d="M3.3 7.4 L6.5 10.6 L9.7 7.4" fill="none" stroke="#2a64ad" stroke-width="2.5"/></svg></div>
<div class="inp" style="left:1047px;top:268px;width:232px;height:24px;"></div>
<div class="sb" style="left:1244px;top:270px;width:15px;height:20px"><svg width="13" height="18" style="position:absolute;left:0;top:0"><path d="M3.3 7.4 L6.5 10.6 L9.7 7.4" fill="none" stroke="#2a64ad" stroke-width="2.5"/></svg></div>
<div class="sb" style="left:1261px;top:270px;width:16px;height:20px"><svg width="14" height="18" style="position:absolute;left:0;top:0"><g transform="translate(7.4 9.1) rotate(-45)"><rect x="-2.2" y="-6.6" width="4.4" height="9.2" rx="0.8" fill="#d4e2f2" stroke="#111" stroke-width="1.15"/><path d="M-2.2 2.6 L0 7.2 L2.2 2.6Z" fill="#111" stroke="#111" stroke-width="0.6"/><line x1="0" y1="-5.4" x2="0" y2="2.6" stroke="#1a1a1a" stroke-width="0.9" stroke-dasharray="1.1 0.9"/></g></svg></div>
<div class="inp" style="left:1047px;top:296px;width:232px;height:24px;"></div>
<div class="t" style="left:1232.00px;top:300.00px;font-size:13px;line-height:17px;color:#000;transform:scaleX(0.9877);transform-origin:0 0;">0,00</div>
<div class="sb" style="left:1262px;top:298px;width:15px;height:20px"><svg width="13" height="18" style="position:absolute;left:0;top:0"><path d="M3.3 7.4 L6.5 10.6 L9.7 7.4" fill="none" stroke="#2a64ad" stroke-width="2.5"/></svg></div>
<div class="inp" style="left:1047px;top:324px;width:232px;height:24px;"></div>
<div class="t" style="left:1232.00px;top:328.00px;font-size:13px;line-height:17px;color:#000;transform:scaleX(0.9877);transform-origin:0 0;">0,00</div>
<div class="sb" style="left:1262px;top:326px;width:15px;height:20px"><svg width="13" height="18" style="position:absolute;left:0;top:0"><path d="M3.3 7.4 L6.5 10.6 L9.7 7.4" fill="none" stroke="#2a64ad" stroke-width="2.5"/></svg></div>
<div style="position:absolute;left:1047px;top:352px;width:80px;height:24px;box-sizing:border-box;border:1px solid #b5bade;background:#ededf3"></div>
<svg width="13" height="12" style="position:absolute;left:1051px;top:358px"><rect x="0" y="1.5" width="2.2" height="7" fill="#7a7e86"/><path d="M2.6 1.2 Q3.2 0.5 5 0.5 H9.5 Q12 0.5 12 3.5 V6 Q12 8 10 8.2 H8 L7.4 10.6 Q6.8 11.6 6 10.6 L5.2 8.4 Q2.6 8.4 2.6 7 Z" fill="#e5603c"/></svg>
<div class="t" style="left:1067.00px;top:356.00px;font-size:13px;line-height:17px;color:#000;transform:scaleX(1.0616);transform-origin:0 0;">Όχι</div>
<div class="inp" style="left:1047px;top:380px;width:232px;height:24px;"></div>
<div class="sb" style="left:1244px;top:382px;width:15px;height:20px"><svg width="13" height="18" style="position:absolute;left:0;top:0"><path d="M3.3 7.4 L6.5 10.6 L9.7 7.4" fill="none" stroke="#2a64ad" stroke-width="2.5"/></svg></div>
<div class="sb" style="left:1261px;top:382px;width:16px;height:20px"><svg width="14" height="18" style="position:absolute;left:0;top:0"><g transform="translate(7.4 9.1) rotate(-45)"><rect x="-2.2" y="-6.6" width="4.4" height="9.2" rx="0.8" fill="#d4e2f2" stroke="#111" stroke-width="1.15"/><path d="M-2.2 2.6 L0 7.2 L2.2 2.6Z" fill="#111" stroke="#111" stroke-width="0.6"/><line x1="0" y1="-5.4" x2="0" y2="2.6" stroke="#1a1a1a" stroke-width="0.9" stroke-dasharray="1.1 0.9"/></g></svg></div>
</body></html>
